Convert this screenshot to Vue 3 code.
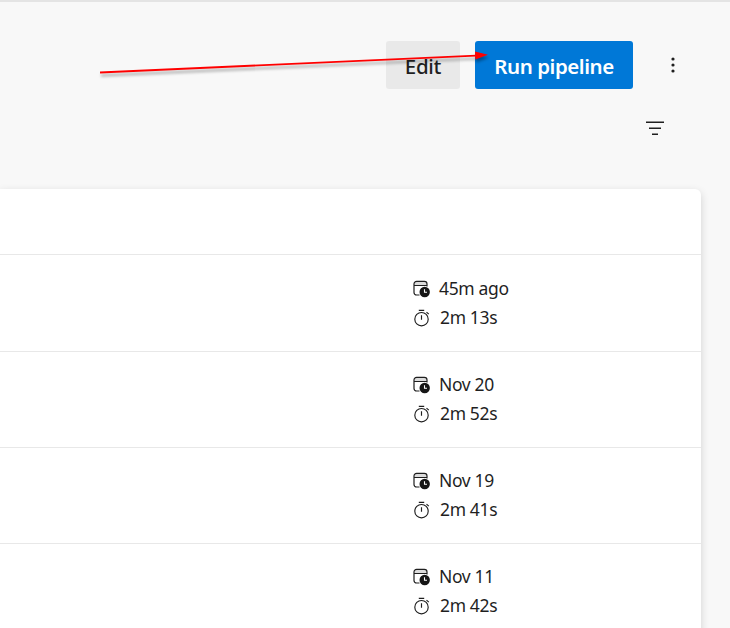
<script setup>
const runs = [
  { when: '45m ago', took: '2m 13s' },
  { when: 'Nov 20', took: '2m 52s' },
  { when: 'Nov 19', took: '2m 41s' },
  { when: 'Nov 11', took: '2m 42s' },
]
</script>

<template>
  <div class="page">
    <header class="toolbar">
      <button class="btn edit"><span>Edit</span></button>
      <button class="btn primary"><span>Run pipeline</span></button>
      <svg class="more" width="6" height="18" viewBox="0 0 6 18">
        <g fill="#1f1f1f">
          <circle cx="3" cy="3" r="1.6" />
          <circle cx="3" cy="9" r="1.6" />
          <circle cx="3" cy="15" r="1.6" />
        </g>
      </svg>
    </header>
    <div class="filters">
      <svg width="18" height="15" viewBox="0 0 18 15">
        <path d="M0 1.25H18M3 7.25H15M6 13.25H12" stroke="#1f1f1f" stroke-width="1.4" />
      </svg>
    </div>
    <main class="card">
      <div class="card-head"></div>
      <div v-for="run in runs" :key="run.when" class="row">
        <div class="line">
          <svg width="18" height="18" viewBox="0 0 18 18">
            <path d="M1.2 5V3.8A2.4 2.4 0 0 1 3.6 1.4H11.4A2.4 2.4 0 0 1 13.8 3.8V5Z" fill="#dcdcdc" />
            <path d="M6.5 15H3.6A2.6 2.6 0 0 1 1 12.4V4A2.6 2.6 0 0 1 3.6 1.4H11.4A2.6 2.6 0 0 1 14 4V6.4M1 5.5H14" fill="none" stroke="#1f1f1f" stroke-width="1.2" />
            <circle cx="11.7" cy="12" r="5.2" fill="#161616" />
            <path d="M11.5 9.2V12.3H14" fill="none" stroke="#fff" stroke-width="1.1" />
          </svg>
          <span class="when">{{ run.when }}</span>
        </div>
        <div class="line">
          <svg width="18" height="18" viewBox="0 0 18 18">
            <g fill="none" stroke="#1f1f1f" stroke-width="1.15">
              <circle cx="8.5" cy="10.2" r="6.7" />
              <path d="M8.5 6.2V10.8M5.8 1.4H11.2M13.5 3.1L15.8 5.1" />
            </g>
          </svg>
          <span class="took">{{ run.took }}</span>
        </div>
      </div>
    </main>
    <svg class="arrow" width="400" height="36" viewBox="0 0 400 36">
      <g class="arrow-shape">
        <path d="M10 22.5L386 5.6" stroke="#f00" stroke-width="1.8" />
        <path d="M385 1.4L398 4.7L385.4 9.4Z" fill="#f00" />
      </g>
    </svg>
  </div>
</template>

<style>
body { background: #f8f8f8; overflow: hidden; }
</style>

<style scoped>
.page {
  position: relative;
  box-sizing: border-box;
  height: 628px;
  overflow: hidden;
  border-top: 2px solid #e4e4e4;
  background: #f8f8f8;
  color: #1f1f1f;
  font-family: "Noto Sans", "Open Sans", sans-serif;
}
.toolbar {
  display: flex;
  align-items: center;
  justify-content: flex-end;
  padding: 39px 54px 0 0;
}
.btn {
  display: flex;
  align-items: center;
  justify-content: center;
  height: 48px;
  padding: 1px 0 0;
  border: 0;
  border-radius: 3px;
  font-family: inherit;
  font-size: 20.5px;
  font-weight: 600;
  white-space: nowrap;
}
.edit { width: 74px; margin-right: 15px; background: #e9e9e9; color: #1f1f1f; font-weight: 500; letter-spacing: -0.3px; }
.primary { width: 158px; background: #0078d7; color: #fff; letter-spacing: -0.45px; }
.more { margin-left: 37px; }
.filters {
  display: flex;
  justify-content: flex-end;
  padding: 32px 66px 0 0;
}
.card {
  height: 460px;
  margin: 53px 29px 0 0;
  border-radius: 0 6px 0 0;
  background: #fff;
  box-shadow: 0 3px 9px rgba(0, 0, 0, 0.16);
}
.card-head { height: 65px; }
.row {
  box-sizing: border-box;
  height: 96px;
  padding: 18px 0 0 413px;
  border-top: 1px solid #e8e8e8;
}
.card-head + .row { height: 97px; padding-top: 19px; }
.line {
  display: flex;
  align-items: center;
  height: 29px;
  font-size: 17.5px;
  white-space: nowrap;
}
.line span { padding-bottom: 1px; letter-spacing: -0.35px; }
.when { margin-left: 8px; }
.took { margin-left: 9px; }
.arrow { position: absolute; left: 90px; top: 48px; }
.arrow-shape { filter: drop-shadow(1.5px 3px 1.5px rgba(0, 0, 0, 0.35)); }
</style>
